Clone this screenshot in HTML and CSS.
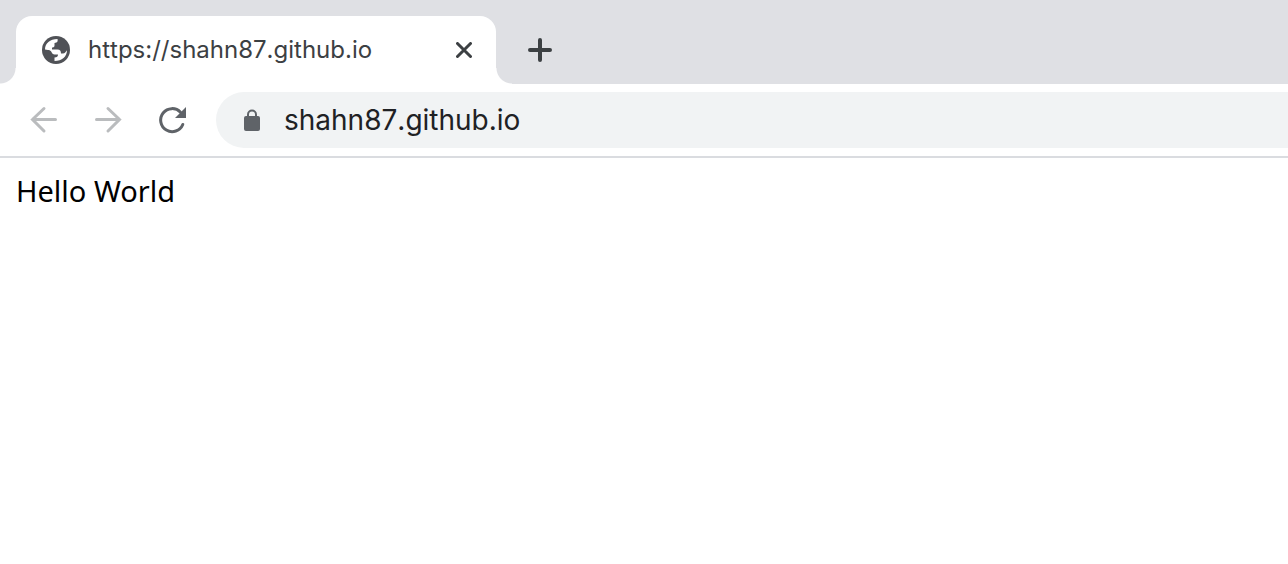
FILE: index.html
```html
<!DOCTYPE html>
<html lang="en">
<head>
<meta charset="utf-8">
<title>https://shahn87.github.io</title>
<link rel="stylesheet" href="styles.css">
</head>
<body>
<header class="browser">
  <div class="tab-strip">
    <div class="tab">
      <svg class="globe" viewBox="0 0 28 28" aria-hidden="true">
        <circle cx="14" cy="14" r="14" fill="#505257"/>
        <path d="M3 13.500C3 7.500 8 3 15.500 3C16 5.500 15.500 6.500 12.500 7V9.500C12.500 11 11.500 11.500 10 11.500V13.500H15.500C18 13.500 19 15 19 17.500H21C23 17.500 23.500 16 25 14.200C25 20.500 20 25 12.500 25V21.500C15 21.500 16 20.500 16 18.500H12.500C11 18.500 10 17.500 9.500 16C8.500 14.500 7.500 14 6 14Z" fill="#fff"/>
      </svg>
      <span class="tab-title">https://shahn87.github.io</span>
      <button class="icon-button close" type="button" aria-label="Close tab">
        <svg viewBox="0 0 16 16"><path d="M1.500 1.500 14.500 14.500M14.500 1.500 1.500 14.500"/></svg>
      </button>
    </div>
    <button class="icon-button new-tab" type="button" aria-label="New tab">
      <svg viewBox="0 0 24 24"><path d="M12 2V22M2 12H22"/></svg>
    </button>
  </div>
  <nav class="toolbar">
    <button class="icon-button nav-button" type="button" aria-label="Back" disabled>
      <svg viewBox="0 0 32 32"><path d="M27.500 15.500H4.500M16 4.500 4.500 15.500 16 27"/></svg>
    </button>
    <button class="icon-button nav-button" type="button" aria-label="Forward" disabled>
      <svg viewBox="0 0 32 32"><path d="M4.500 15.500H27.500M16 4.500 27.500 15.500 16 27"/></svg>
    </button>
    <button class="icon-button nav-button reload" type="button" aria-label="Reload">
      <svg viewBox="0 0 32 32"><path d="M26.800 20.500A11.500 11.500 0 1 1 24.500 8.200"/><path class="solid" d="M30 3V14H19Z"/></svg>
    </button>
    <label class="address">
      <svg class="lock" viewBox="0 0 16 22" aria-hidden="true">
        <path d="M4 9V5.500a4 4 0 0 1 8 0V9" fill="none" stroke="#5f6368" stroke-width="2"/>
        <rect y="7" width="16" height="15" rx="2" fill="#5f6368"/>
      </svg>
      <input class="address-input" type="text" aria-label="Address" value="shahn87.github.io" spellcheck="false">
    </label>
  </nav>
</header>
<main class="page">Hello World</main>
</body>
</html>
```
FILE: styles.css
```css
* {
  box-sizing: border-box;
}

body {
  margin: 0;
  background: #fff;
  font-family: Inter, "Liberation Sans", sans-serif;
  font-kerning: none;
}

.tab-strip {
  display: flex;
  padding: 16px 16px 0;
  background: #dfe0e4;
}

.tab {
  position: relative;
  display: flex;
  align-items: center;
  flex: 0 1 480px;
  height: 68px;
  padding: 0 20px 0 26px;
  border-radius: 16px 16px 0 0;
  background: #fff;
}

/* Curved feet joining the tab to the toolbar */
.tab::before,
.tab::after {
  content: "";
  position: absolute;
  bottom: 0;
  width: 16px;
  height: 16px;
}

.tab::before {
  right: 100%;
  background: radial-gradient(circle at 0 0, #dfe0e4 15px, #fff 16px);
}

.tab::after {
  left: 100%;
  background: radial-gradient(circle at 100% 0, #dfe0e4 15px, #fff 16px);
}

.globe {
  width: 28px;
  height: 28px;
  margin-right: 18px;
}

.tab-title {
  flex: 1;
  color: #3c4043;
  font-size: 24px;
  line-height: 32px;
  white-space: nowrap;
}

.icon-button {
  display: flex;
  align-items: center;
  justify-content: center;
  flex: none;
  padding: 0;
  border: 0;
  background: none;
}

.icon-button path {
  fill: none;
  stroke: #3c4043;
  stroke-width: 3;
  stroke-linecap: round;
}

.close {
  width: 24px;
  height: 24px;
}

.close svg {
  width: 16px;
  height: 16px;
}

.new-tab {
  width: 56px;
  height: 68px;
  margin-left: 16px;
}

.new-tab svg {
  width: 24px;
  height: 24px;
}

.new-tab path {
  stroke-width: 4;
}

.toolbar {
  display: flex;
  align-items: center;
  height: 74px;
  padding: 8px 0 8px 12px;
  border-bottom: 2px solid #dadce0;
}

.nav-button {
  width: 64px;
  height: 56px;
}

.nav-button svg {
  width: 32px;
  height: 32px;
}

.nav-button path {
  stroke: #babcbe;
}

.reload path {
  stroke: #5f6368;
}

.reload .solid {
  fill: #5f6368;
  stroke: none;
}

.address {
  display: flex;
  align-items: center;
  flex: 1;
  height: 56px;
  margin-left: 12px;
  padding-left: 28px;
  border-radius: 28px 0 0 28px;
  background: #f1f3f4;
}

.lock {
  width: 16px;
  height: 22px;
  margin-right: 24px;
}

.address-input {
  flex: 1;
  min-width: 0;
  padding: 0;
  border: 0;
  outline: 0;
  background: none;
  color: #202124;
  font-family: inherit;
  font-kerning: inherit;
  font-size: 28px;
  line-height: 40px;
}

.page {
  padding: 12px 16px;
  color: #000;
  font-family: "Noto Sans", sans-serif;
  font-kerning: normal;
  font-size: 29px;
  line-height: 42px;
}
```
